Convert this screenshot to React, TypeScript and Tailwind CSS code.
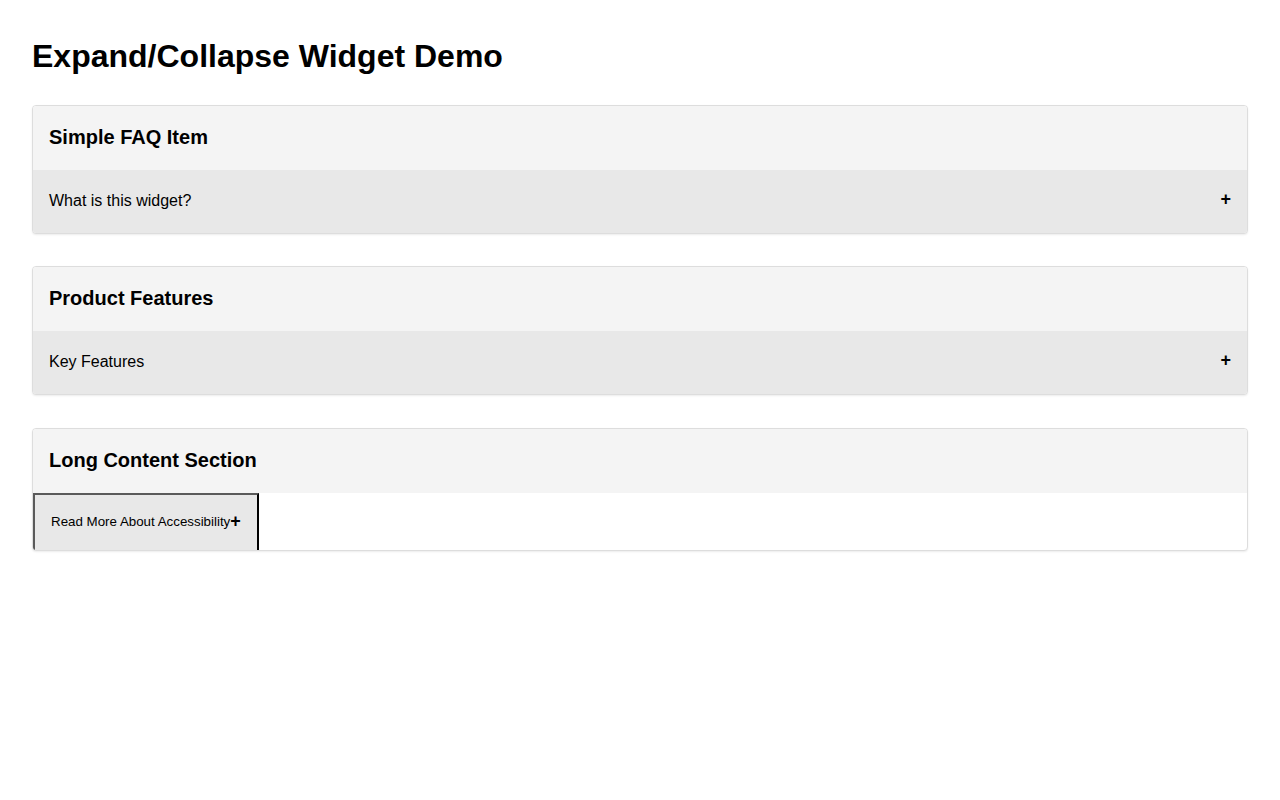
import React from 'react';

interface SectionProps {
  title: string;
  label: string;
}

const font = { fontFamily: '"Liberation Sans", Arial, sans-serif' };

// Card with a title bar and a full-width toggle row
const Section: React.FC<SectionProps> = ({ title, label }) => {
  const [open, setOpen] = React.useState(false);
  return (
    <div className="border border-[#dddddd] rounded-[4px] overflow-hidden bg-white shadow-[0_1px_2px_rgba(0,0,0,0.08)]">
      <div className="h-16 flex items-center px-4 pb-[2px] bg-[#f4f4f4]">
        <h3 className="text-[20px] font-bold leading-7 text-black">{title}</h3>
      </div>
      <button
        type="button"
        onClick={() => setOpen(!open)}
        aria-expanded={open}
        className="w-full h-[63px] flex items-center justify-between px-4 pb-[2px] bg-[#e8e8e8] text-[16px] text-black text-left"
      >
        <span>{label}</span>
        <span className="mb-[3px] text-[18px] font-bold leading-none">{open ? '−' : '+'}</span>
      </button>
    </div>
  );
};

const LongSection: React.FC = () => {
  const [open, setOpen] = React.useState(false);
  return (
    <div className="mt-px h-[123px] border border-[#dddddd] rounded-[4px] overflow-hidden bg-white shadow-[0_1px_2px_rgba(0,0,0,0.08)]">
      <div className="h-16 flex items-center px-4 pb-[2px] bg-[#f4f4f4]">
        <h3 className="text-[20px] font-bold leading-7 text-black">Long Content Section</h3>
      </div>
      <button
        type="button"
        onClick={() => setOpen(!open)}
        aria-expanded={open}
        className="h-[60px] flex items-center px-4 pb-[2px] bg-[#e8e8e8] border-2 border-t-[#5a5a5a] border-l-[#5a5a5a] border-r-black border-b-black text-[13.33px] text-black"
      >
        <span>Read More About Accessibility</span>
        <span className="mb-[2px] text-[18px] font-bold leading-none">{open ? '−' : '+'}</span>
      </button>
    </div>
  );
};

export default function App() {
  return (
    <div className="min-h-screen bg-white px-8 pt-8" style={font}>
      <h1 className="mt-[6px] mb-[30px] text-[32px] font-bold leading-[37px] text-black">Expand/Collapse Widget Demo</h1>
      <div className="flex flex-col gap-8">
        <Section title="Simple FAQ Item" label="What is this widget?" />
        <Section title="Product Features" label="Key Features" />
        <LongSection />
      </div>
    </div>
  );
}
